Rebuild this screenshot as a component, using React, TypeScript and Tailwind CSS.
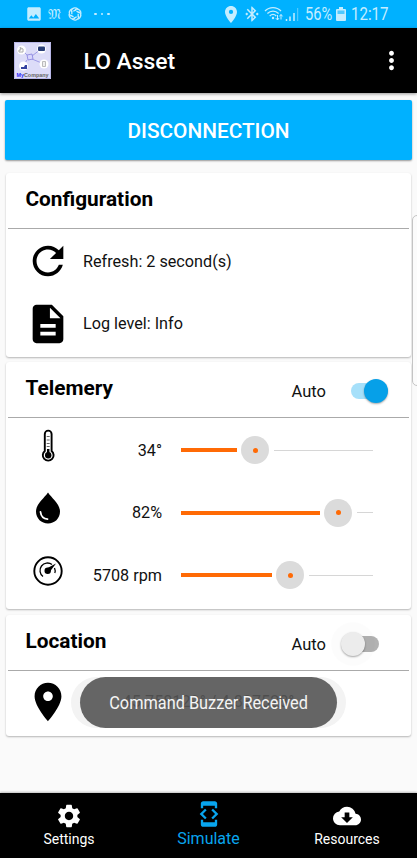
import type { ReactNode } from "react";
import { MdBluetoothConnected, MdCloudDownload, MdDeveloperMode, MdImage, MdMoreVert, MdSettings } from "react-icons/md";

function StatusBar() {
  return (
    <div className="flex h-[28px] items-center bg-[#00b1ff] text-[#c4edff]">
      <MdImage className="ml-[25px] h-[18px] w-[18px] shrink-0" />
      <span className="ml-[4px] w-[15px] text-center font-['DejaVu_Sans',sans-serif] text-[14px] leading-none">𝔐</span>
      <svg className="ml-[6px] h-[14px] w-[14px] shrink-0" viewBox="0 0 14 14" fill="none" stroke="currentColor" strokeWidth="1.3">
        {[0, 60, 120, 180, 240, 300].map((a) => (
          <path key={a} transform={`rotate(${a} 7 7)`} d="M3.4 4.9V3.2C4.7.7 7.7.2 9.9 1.9M5.3 4.3 8.3 2.6" />
        ))}
      </svg>
      <div className="ml-[12px] flex gap-[4px]">
        <i className="h-[2.5px] w-[2.5px] rounded-full bg-current" />
        <i className="h-[2.5px] w-[2.5px] rounded-full bg-current" />
        <i className="h-[2.5px] w-[2.5px] rounded-full bg-current" />
      </div>
      <svg className="ml-[115px] h-[17px] w-[12px] shrink-0" viewBox="5 2 14 20" preserveAspectRatio="none" fill="currentColor">
        <path d="M12 2C8.13 2 5 5.13 5 9c0 5.25 7 13 7 13s7-7.75 7-13c0-3.87-3.13-7-7-7zm0 9.5a2.5 2.5 0 1 1 0-5 2.5 2.5 0 0 1 0 5z" />
      </svg>
      <MdBluetoothConnected className="ml-[6px] h-[18px] w-[18px] shrink-0" />
      <svg className="ml-[3px] h-[16px] w-[20px] shrink-0" viewBox="0 0 20 16" fill="none" stroke="currentColor" strokeWidth="1.3">
        <path d="M1 5c4.5-4.6 11.500-4.600 16 0M3.400 7.500c3.200-3.200 8-3.200 11.200 0M5.700 10c2-1.900 4.600-1.900 6.600 0" />
        <circle cx="9" cy="12" r="1.200" fill="currentColor" stroke="none" />
        <path d="M13.500 9v5m-1.700-1.900 1.700 1.900 1.500-1.900M17 13.500v-5m-1.600 1.900L17 8.500l1.600 1.900" strokeWidth="1" />
      </svg>
      <svg className="ml-[1px] h-[13px] w-[14px] shrink-0" viewBox="0 0 14 13" stroke="currentColor">
        <path d="M1.500 13v-2M5 13V8.500M9 13V5" strokeWidth="1.500" />
        <path d="M12.700 13V0" strokeWidth="1" opacity=".5" />
      </svg>
      <span className="ml-[6px] w-[28px] origin-left scale-x-[0.84] pt-[2px] text-[17.5px] leading-none">56%</span>
      <svg className="ml-[3px] h-[14px] w-[10px] shrink-0" viewBox="0 0 10 14" fill="currentColor">
        <path d="M3 0h4v2H3zM1 2h8q1 0 1 1v10q0 1-1 1H1q-1 0-1-1V3q0-1 1-1z" />
        <path d="M1.500 3.500h7V7h-7z" fill="#00b1ff" opacity=".6" />
      </svg>
      <span className="ml-[5px] origin-left scale-x-[0.86] pt-[2px] text-[17.5px] leading-none">12:17</span>
    </div>
  );
}

function CompanyLogo() {
  return (
    <svg className="h-[37px] w-[37px]" viewBox="0 0 37 37">
      <path d="M0 0h37v37H0z" fill="#dcdcf8" />
      <path d="M.5.5h36v36H.5z" fill="none" stroke="#b9b8e8" />
      <path d="m8 8 7 7m3-1 9-7M13 18l-4 6m9-7 12 5" stroke="#8d89df" strokeWidth=".8" fill="none" />
      <path d="m13 13 5-1 1 5-5 1z" fill="#d8d6fc" stroke="#8580de" strokeWidth=".8" />
      <circle cx="7.500" cy="8" r="4.500" fill="#fff" />
      <circle cx="27.500" cy="7" r="4.500" fill="#fff" />
      <circle cx="9.500" cy="24" r="4.500" fill="#fff" />
      <circle cx="30" cy="22" r="4.500" fill="#fff" />
      <path d="M6 5.500 9 7v3H5V8h2z" fill="none" stroke="#aaa" />
      <rect x="24" y="4.500" width="7" height="4.500" rx="1" fill="#293e77" />
      <path d="M7 25h3l1-2h2v4H7z" fill="#3543a0" />
      <path d="M28.500 19.500h3v5h-3z" fill="#eee" stroke="#bbb" />
      <text x="2.500" y="35" textLength="32" lengthAdjust="spacingAndGlyphs" fontFamily="Liberation Sans, sans-serif" fontWeight="bold" fontSize="6" fill="#666">
        <tspan fill="#2b25f4">My</tspan>Company
      </text>
    </svg>
  );
}

function Card({ title, className, children, toggle }: { title: string; className: string; children: ReactNode; toggle?: ReactNode }) {
  return (
    <section className={`ml-[6px] w-[405px] rounded-[3px] bg-white shadow-[0_1px_2px_rgba(0,0,0,.28)] ${className}`}>
      <div className="mx-[2px] flex h-[56px] items-center border-b border-[#aaa] pr-[20px] pl-[17.5px]">
        <h2 className="grow pb-[3px] text-[20.8px] leading-none font-bold text-black">{title}</h2>
        {toggle}
      </div>
      {children}
    </section>
  );
}

function Toggle({ on }: { on: boolean }) {
  return (
    <div className="flex items-center pt-[3px]">
      <span className="pt-[2px] text-[16.5px] leading-none">Auto</span>
      {on ? (
        <div className="mr-[1px] ml-[25px] flex h-[16px] w-[37px] items-center justify-end rounded-full bg-[#a6e0fa]">
          <i className="h-[24px] w-[24px] shrink-0 rounded-full bg-[#06a0e8] shadow-[0_1px_2px_rgba(0,0,0,.35)]" />
        </div>
      ) : (
        <div className="mr-[10px] ml-[16px] flex h-[16px] w-[37px] items-center rounded-full bg-[#b2b2b2]">
          <i className="-ml-[1px] h-[24px] w-[24px] shrink-0 rounded-full bg-[#ececec] shadow-[0_1px_2px_rgba(0,0,0,.35),0_0_0_10px_rgba(0,0,0,.01)]" />
        </div>
      )}
    </div>
  );
}

function Glyph({ d }: { d: string }) {
  return (
    <svg className="h-[46px] w-[46px] shrink-0" viewBox="0 0 24 24" fill="#000">
      <path d={d} />
    </svg>
  );
}

function Thermometer() {
  return (
    <svg className="h-[36px] w-[30px]" viewBox="0 0 30 36" fill="none" stroke="#000">
      <path d="M11.800 23V6a3.400 3.400 0 0 1 6.800 0V23a5.400 5.400 0 1 1-6.800 0z" strokeWidth="1.900" />
      <path d="M15.200 21v6" strokeWidth="2.500" />
      <circle cx="15.200" cy="27.300" r="3.200" fill="#000" stroke="none" />
      <path d="M13.700 8.500h3M13.700 12h3M13.700 15.500h3M13.700 18.500h3" strokeWidth=".6" />
    </svg>
  );
}

function Drop() {
  return (
    <svg className="h-[32px] w-[26px]" viewBox="0 0 26 32">
      <path d="M13 .5c3.500 5.300 12 11.500 12 19 0 7-5.500 12-12 12s-12-5-12-12C1 12 9.500 5.800 13 .5z" />
      <path d="M5.500 20c.5 4 3.200 6.800 7 7.200" fill="none" stroke="#fff" strokeWidth="1.800" strokeLinecap="round" />
    </svg>
  );
}

function Gauge() {
  return (
    <svg className="h-[30px] w-[30px]" viewBox="0 0 30 30" fill="none" stroke="#000">
      <circle cx="15" cy="15" r="13.700" strokeWidth="1.900" />
      <path d="M10 20.500a7.400 7.400 0 0 1 9-12M21.500 12q1.200 2.800.3 5" strokeWidth="1.300" />
      <circle cx="14.700" cy="14.700" r="3.200" fill="#000" stroke="none" />
      <path d="m13.500 12.500 9.500-5-6 8z" fill="#000" stroke="none" />
    </svg>
  );
}

function TelemetryRow({ icon, value, fill }: { icon: ReactNode; value: string; fill: number }) {
  return (
    <div className="flex h-[62.5px] items-center">
      <div className="mb-[9px] ml-[19px] flex w-[46px] justify-center">{icon}</div>
      <span className="w-[91px] pt-[1px] text-right text-[16.2px] leading-none">{value}</span>
      <div className="ml-[19px] flex w-[192px] items-center">
        <i className="h-[4px] shrink-0 bg-[#ff6a05]" style={{ width: fill }} />
        <div className="mr-[4.5px] ml-[4.4px] flex h-[28px] w-[28px] shrink-0 items-center justify-center rounded-full bg-[#dbdbdb]">
          <i className="h-[5px] w-[5px] rounded-full bg-[#ff6a05]" />
        </div>
        <i className="h-px grow bg-[#d6d6d6]" />
      </div>
    </div>
  );
}

export default function App() {
  return (
    <div className="relative flex h-[858px] w-[417px] flex-col overflow-hidden bg-[#fafafa] font-[Roboto,sans-serif] text-[#111]">
      <StatusBar />
      <header className="flex h-[65px] shrink-0 items-center bg-black pl-[14px] text-white shadow-[0_1px_3px_rgba(0,0,0,.4)]">
        <CompanyLogo />
        <h1 className="ml-[32.5px] grow pt-[4px] text-[22.9px] leading-none font-medium">LO Asset</h1>
        <MdMoreVert className="mr-[11px] h-[29px] w-[29px]" />
      </header>
      <button className="mt-[7px] ml-[5px] flex h-[60px] w-[407px] shrink-0 items-center justify-center rounded-[2px] bg-[#00b1ff] pt-[3px] text-[20.8px] leading-none font-medium text-white shadow-[0_1px_2px_rgba(0,0,0,.4)]">
        DISCONNECTION
      </button>
      <main className="flex flex-col">
        <Card title="Configuration" className="mt-[13px] h-[184px]">
          <div className="mt-[1px] flex h-[62.5px] items-center pl-[19px]">
            <Glyph d="M17.65 6.35C16.2 4.9 14.21 4 12 4c-4.42 0-7.99 3.58-7.99 8s3.57 8 7.99 8c3.73 0 6.84-2.55 7.73-6h-2.08c-.82 2.33-3.04 4-5.65 4-3.31 0-6-2.69-6-6s2.69-6 6-6c1.66 0 3.14.69 4.22 1.78L13 11h7V4l-2.35 2.35z" />
            <span className="ml-[12px] pt-[2px] text-[16.2px] leading-none">Refresh: 2 second(s)</span>
          </div>
          <div className="flex h-[62.5px] items-center pl-[19px]">
            <Glyph d="M14 2H6c-1.1 0-1.99.9-1.99 2L4 20c0 1.1.89 2 1.99 2H18c1.1 0 2-.9 2-2V8l-6-6zm2 16H8v-2h8v2zm0-4H8v-2h8v2zm-3-5V3.5L18.500 9H13z" />
            <span className="ml-[12px] text-[16.2px] leading-none">Log level: Info</span>
          </div>
        </Card>
        <Card title="Telemery" className="mt-[5px] h-[247px]" toggle={<Toggle on />}>
          <div className="flex flex-col pt-[1px]">
            <TelemetryRow icon={<Thermometer />} value="34°" fill={56} />
            <TelemetryRow icon={<Drop />} value="82%" fill={139} />
            <TelemetryRow icon={<Gauge />} value="5708 rpm" fill={91} />
          </div>
        </Card>
        <Card title="Location" className="mt-[6px] h-[121px]" toggle={<Toggle on={false} />}>
          <div className="flex h-[62px] items-center pl-[19px]">
            <Glyph d="M12 2C8.13 2 5 5.13 5 9c0 5.25 7 13 7 13s7-7.75 7-13c0-3.87-3.13-7-7-7zm0 9.5c-1.38 0-2.5-1.12-2.5-2.5s1.12-2.5 2.5-2.5 2.5 1.12 2.5 2.5-1.12 2.5-2.5 2.5z" />
            <div className="flex h-[51px] w-[275px] items-center justify-center rounded-full bg-[#f3f3f3] pt-[1px] text-[16.2px]">45.758129° / 4.837528°</div>
          </div>
        </Card>
      </main>
      <nav className="mt-auto flex h-[65px] shrink-0 justify-between bg-black pr-[36px] pl-[43px] text-white shadow-[0_-1px_2px_rgba(0,0,0,.25)]">
        <div className="flex w-[52px] flex-col items-center pt-[9px]">
          <MdSettings className="h-[28px] w-[28px]" />
          <span className="mt-[2px] text-[14px] leading-none">Settings</span>
        </div>
        <div className="ml-[9px] flex w-[64px] flex-col items-center pt-[7px] text-[#08a5ee]">
          <MdDeveloperMode className="h-[28px] w-[28px]" />
          <span className="mt-[3px] text-[16px] leading-none">Simulate</span>
        </div>
        <div className="flex w-[68px] flex-col items-center pt-[9px]">
          <MdCloudDownload className="h-[28px] w-[28px]" />
          <span className="mt-[2px] text-[14px] leading-none">Resources</span>
        </div>
      </nav>
      <div className="absolute top-[677px] left-[80px] flex h-[51px] w-[257px] items-center justify-center rounded-full bg-[#555555]/90 text-[#f4f4f4]">
        <span className="scale-x-[0.907] pt-[1px] text-[18px] leading-none whitespace-nowrap">Command Buzzer Received</span>
      </div>
      <div className="absolute top-[215px] left-[412px] h-[171px] w-[12px] rounded-[5px] border border-[#c4c4c4] bg-[#fbfbfb]" />
    </div>
  );
}
